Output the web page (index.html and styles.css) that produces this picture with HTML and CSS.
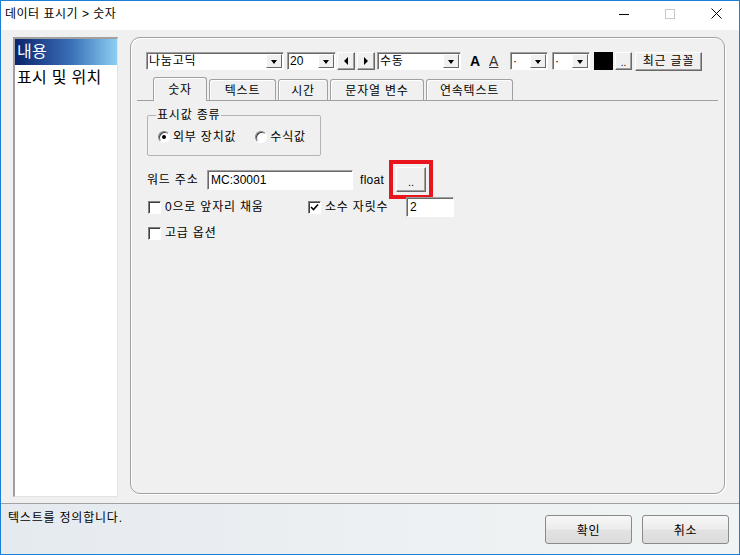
FILE: index.html
```html
<!DOCTYPE html>
<html lang="ko">
  <head>
    <meta charset="UTF-8" />
    <title>데이터 표시기 &gt; 숫자</title>
    <link rel="stylesheet" href="styles.css">
  </head>
  <body>
    <div class="window">
      <div class="titlebar">
        <div class="title">데이터 표시기 &gt; 숫자</div>
        <div class="caption">
          <span class="cap"><svg width="10" height="10"><path d="M0 5.5h10" stroke="#000" /></svg></span>
          <span class="cap"><svg width="10" height="10"><rect x="0.5" y="0.5" width="9" height="9" fill="none" stroke="#c8c8c8" /></svg></span>
          <span class="cap"><svg width="11" height="11"><path d="M0.5 0.5l10 10M10.5 0.5l-10 10" stroke="#000" /></svg></span>
        </div>
      </div>

      <div class="main">
        <ul class="listbox">
          <li class="selected">내용</li>
          <li>표시 및 위치</li>
        </ul>

        <div class="panel">
          <div class="toolbar">
            <div class="combo w-font"><span class="val">나눔고딕</span><span class="drop"></span></div>
            <div class="combo w-size"><span class="val">20</span><span class="drop"></span></div>
            <span class="btn3d arrow first"><span class="tri-left"></span></span>
            <span class="btn3d arrow"><span class="tri-right"></span></span>
            <div class="combo w-mode"><span class="val">수동</span><span class="drop"></span></div>
            <span class="glyph-a bold">A</span>
            <span class="glyph-a under">A</span>
            <div class="combo w-dot first-dot"><span class="val">·</span><span class="drop"></span></div>
            <div class="combo w-dot"><span class="val">·</span><span class="drop"></span></div>
            <span class="swatch"></span>
            <span class="btn3d dots">..</span>
            <span class="btn3d recent">최근 글꼴</span>
          </div>

          <div class="tabctl">
            <div class="tabs">
              <span class="tab active t1">숫자</span>
              <span class="tab t2">텍스트</span>
              <span class="tab t3">시간</span>
              <span class="tab t4">문자열 변수</span>
              <span class="tab t5">연속텍스트</span>
            </div>

            <div class="tabbody">
              <fieldset class="group">
                <legend>표시값 종류</legend>
                <label class="radio"><span class="dot on"></span>외부 장치값</label>
                <label class="radio second"><span class="dot"></span>수식값</label>
              </fieldset>

              <div class="row addr">
                <span class="lbl">워드 주소</span>
                <span class="field w-addr">MC:30001</span>
                <span class="type">float</span>
                <span class="btn3d pick">..</span>
              </div>

              <div class="row opts">
                <label class="check c1"><span class="box"></span>0으로 앞자리 채움</label>
                <label class="check c2"><span class="box checked"><svg width="9" height="9"><path d="M1 4l2.5 2.5L8 1.5" fill="none" stroke="#000" stroke-width="1.6" /></svg></span>소수 자릿수</label>
                <span class="field w-digits">2</span>
              </div>

              <div class="row adv">
                <label class="check"><span class="box"></span>고급 옵션</label>
              </div>
            </div>
          </div>
        </div>
      </div>

      <div class="statusbar">
        <span class="hint">텍스트를 정의합니다.</span>
        <div class="actions">
          <button class="push">확인</button>
          <button class="push">취소</button>
        </div>
      </div>
    </div>
  </body>
</html>
```

FILE: styles.css
```css
* {
  margin: 0;
  padding: 0;
  box-sizing: border-box;
}

body {
  width: 740px;
  height: 555px;
  overflow: hidden;
  font-family: "Liberation Sans", "Noto Sans CJK KR", sans-serif;
  font-size: 12px;
  line-height: 14px;
  letter-spacing: 0.8px;
  color: #000;
  background: #fff;
}

.window {
  width: 740px;
  height: 555px;
  border: 1px solid #1c7fd6;
  display: flex;
  flex-direction: column;
}

/* title bar */
.titlebar {
  height: 29px;
  flex: none;
  background: #fff;
  display: flex;
  align-items: flex-start;
}

.title {
  flex: 1;
  letter-spacing: 0.5px;
  padding: 6px 0 0 4px;
}

.caption {
  display: flex;
}

.cap {
  width: 46px;
  height: 25px;
  display: flex;
  align-items: center;
  justify-content: center;
}

/* main area */
.main {
  height: 473px;
  flex: none;
  background: #f0f0f0;
  display: flex;
  align-items: flex-start;
  padding: 7px 0 0 12px;
  gap: 12px;
}

.listbox {
  list-style: none;
  width: 105px;
  height: 460px;
  background: #fff;
  border-style: solid;
  border-width: 2px 1px 1px 2px;
  border-color: #a0a0a0 #e3e3e3 #e3e3e3 #a0a0a0;
  font-size: 16px;
  letter-spacing: 0.3px;
}

.listbox li {
  height: 26px;
  line-height: 26px;
  padding-left: 2px;
}

.listbox li.selected {
  color: #fff;
  background: linear-gradient(90deg, #0a246a, #3a6fb8 55%, #8ccff2);
}

.panel {
  width: 595px;
  height: 457px;
  border: 1px solid #a0a0a0;
  border-radius: 10px;
  box-shadow: inset 1px 1px 0 #fff, 1px 1px 0 #fff;
  padding: 14px 0 0 15px;
}

/* toolbar */
.toolbar {
  height: 18px;
  display: flex;
  align-items: center;
}

.combo {
  height: 18px;
  background: #fff;
  border: 1px solid;
  border-color: #a0a0a0 #fff #fff #a0a0a0;
  box-shadow: inset 1px 1px 0 #696969;
  display: flex;
  align-items: center;
  padding: 1px 1px 1px 2px;
}

.combo .val {
  flex: 1;
  line-height: 14px;
  white-space: nowrap;
  overflow: hidden;
}

.drop {
  width: 16px;
  height: 14px;
  background: #f0f0f0;
  border: 1px solid;
  border-color: #fff #696969 #696969 #fff;
  display: flex;
  align-items: center;
  justify-content: center;
}

.drop::after {
  content: "";
  border-left: 3.5px solid transparent;
  border-right: 3.5px solid transparent;
  border-top: 4px solid #000;
  margin-top: 1px;
}

.w-font {
  width: 138px;
}

.w-size {
  width: 49px;
  margin-left: 3px;
  letter-spacing: 0;
}

.w-mode {
  width: 84px;
  margin-left: 2px;
}

.w-dot {
  width: 38px;
  margin-left: 4px;
}

.w-dot.first-dot {
  margin-left: 9px;
}

.btn3d {
  height: 18px;
  background: #f0f0f0;
  border: 1px solid;
  border-color: #fff #696969 #696969 #fff;
  box-shadow: inset -1px -1px 0 #a0a0a0;
  display: flex;
  align-items: center;
  justify-content: center;
  white-space: nowrap;
}

.arrow {
  width: 18px;
  margin-left: 2px;
}

.arrow.first {
  margin-left: 1px;
}

.tri-left {
  border-top: 4px solid transparent;
  border-bottom: 4px solid transparent;
  border-right: 4px solid #000;
}

.tri-right {
  border-top: 4px solid transparent;
  border-bottom: 4px solid transparent;
  border-left: 4px solid #000;
}

.glyph-a {
  width: 12px;
  font-size: 14px;
  line-height: 16px;
  letter-spacing: 0;
}

.glyph-a.bold {
  font-weight: bold;
  margin-left: 9px;
}

.glyph-a.under {
  text-decoration: underline;
  color: #333;
  margin-left: 7px;
}

.swatch {
  width: 19px;
  height: 18px;
  background: #000;
  margin-left: 4px;
}

.dots {
  width: 17px;
  margin-left: 2px;
  font-size: 10px;
  line-height: 10px;
  padding-top: 4px;
  letter-spacing: 0;
}

.recent {
  width: 67px;
  height: 19px;
  margin-left: 3px;
}

/* tabs */
.tabctl {
  width: 581px;
  margin: 7px 0 0 -9px;
}

.tabs {
  height: 24px;
  display: flex;
  align-items: flex-end;
  padding-left: 16px;
  border-bottom: 1px solid #a0a0a0;
}

.tab {
  height: 21px;
  margin-left: 2px;
  border: 1px solid #a0a0a0;
  border-bottom: none;
  border-radius: 3px 3px 0 0;
  box-shadow: inset 1px 1px 0 #fff;
  display: flex;
  align-items: center;
  justify-content: center;
  padding-top: 2px;
}

.tab.active {
  height: 24px;
  margin: 0 0 -1px 0;
  background: #f0f0f0;
  padding-top: 0;
  position: relative;
}

.t1 { width: 54px; }
.t2 { width: 67px; }
.t3 { width: 50px; }
.t4 { width: 94px; }
.t5 { width: 87px; }

.tabbody {
  padding-left: 9px;
}

/* group box */
.group {
  width: 174px;
  height: 48px;
  margin: 7px 0 0 1px;
  border: 1px solid #b4b4b4;
  border-radius: 2px;
  padding: 0 0 3px 8px;
  display: flex;
  align-items: center;
}

.group legend {
  padding: 0 1px;
  line-height: 14px;
}

.radio {
  display: flex;
  align-items: center;
  gap: 3px;
  margin-left: 2px;
}

.radio.second {
  margin-left: 19px;
}

.dot {
  width: 12px;
  height: 12px;
  border-radius: 50%;
  background: #fff;
  border: 1px solid;
  border-color: #808080 #fff #fff #808080;
  box-shadow: inset 1px 1px 0 #404040;
  display: flex;
  align-items: center;
  justify-content: center;
}

.dot.on::after {
  content: "";
  width: 4px;
  height: 4px;
  border-radius: 50%;
  background: #000;
}

/* rows */
.row {
  display: flex;
  align-items: center;
}

.addr {
  height: 25px;
  margin-top: 11px;
  padding-left: 1px;
}

.lbl {
  width: 60px;
}

.field {
  height: 20px;
  background: #fff;
  border: 1px solid;
  border-color: #a0a0a0 #fff #fff #a0a0a0;
  box-shadow: inset 1px 1px 0 #696969;
  padding: 2px 0 0 3px;
  line-height: 15px;
  letter-spacing: 0;
}

.w-addr {
  width: 146px;
}

.type {
  width: 36px;
  margin-left: 7px;
  letter-spacing: 0.3px;
}

.pick {
  width: 30px;
  height: 25px;
  font-size: 11px;
  padding-top: 5px;
  letter-spacing: 0;
  outline: 4px solid #e8151c;
  outline-offset: 3px;
}

.opts {
  height: 20px;
  margin-top: 5px;
  padding-left: 2px;
}

.check {
  display: flex;
  align-items: center;
  gap: 4px;
}

.c1 {
  width: 160px;
}

.c2 {
  width: 98px;
}

.box {
  width: 13px;
  height: 13px;
  background: #fff;
  border: 1px solid;
  border-color: #808080 #fff #fff #808080;
  box-shadow: inset 1px 1px 0 #404040;
  display: flex;
  align-items: center;
  justify-content: center;
}

.w-digits {
  width: 48px;
}

.adv {
  height: 16px;
  margin-top: 8px;
  padding-left: 2px;
}

/* status bar */
.statusbar {
  flex: 1;
  border-top: 1px solid #a0a0a0;
  background: linear-gradient(90deg, #e5eaf0, #edf1f3 60%, #f0f4f4);
  display: flex;
  align-items: flex-start;
}

.hint {
  margin: 7px 0 0 7px;
}

.actions {
  margin: 11px 10px 0 auto;
  display: flex;
  gap: 10px;
}

.push {
  width: 87px;
  height: 29px;
  font-family: inherit;
  font-size: 12px;
  letter-spacing: 0.8px;
  border: 1px solid #8a8a8a;
  border-radius: 3px;
  background: linear-gradient(#f7f7f7, #ececec 48%, #e2e2e2 52%, #dcdcdc);
  color: #000;
}
```
